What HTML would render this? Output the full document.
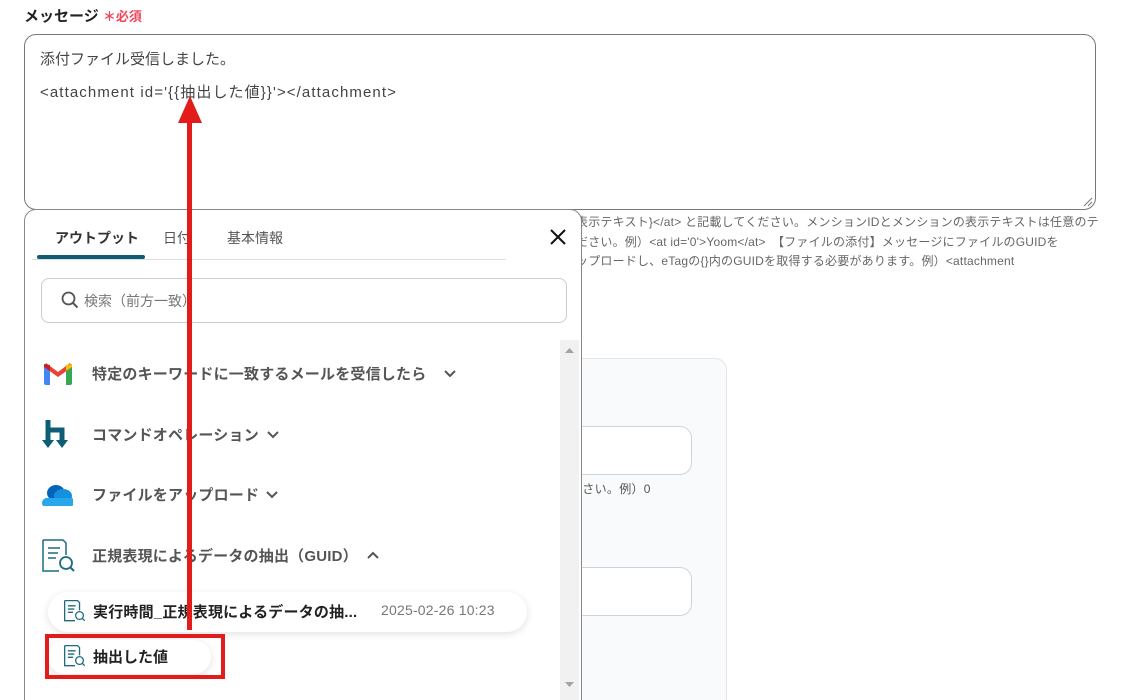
<!DOCTYPE html>
<html><head><meta charset="utf-8"><style>
*{box-sizing:border-box;margin:0;padding:0}
html,body{width:1136px;height:700px;overflow:hidden}
body{background:#fff;font-family:"Liberation Sans","Noto Sans CJK JP",sans-serif;position:relative;color:#333}
.a{position:absolute;white-space:nowrap}
</style></head><body>
<div class="a" style="left:24px;top:5px;font-size:15px;font-weight:bold;color:#222">メッセージ <span style="color:#f0455a;font-size:13px">＊必須</span></div>
<div class="a" style="left:24px;top:34px;width:1072px;height:176px;border:1px solid #777;border-radius:12px"></div>
<div class="a" style="left:40px;top:48px;font-size:15px;color:#444">添付ファイル受信しました。</div>
<div class="a" style="left:40px;top:81px;font-size:15px;color:#444;letter-spacing:1.1px">&lt;attachment id='{{抽出した値}}'&gt;&lt;/attachment&gt;</div>
<svg class="a" style="left:1082px;top:196px" width="12" height="12"><path d="M2 10L10 2M6 10L10 6" stroke="#777" stroke-width="1"/></svg>
<div class="a" style="left:576px;top:213px;font-size:12px;color:#666;line-height:19.5px;letter-spacing:0.2px">表示テキスト}&lt;/at&gt; と記載してください。メンションIDとメンションの表示テキストは任意のテ<br>ださい。例）&lt;at id='0'&gt;Yoom&lt;/at&gt;　【ファイルの添付】メッセージにファイルのGUIDを<br>ップロードし、eTagの{}内のGUIDを取得する必要があります。例）&lt;attachment</div>
<div class="a" style="left:560px;top:358px;width:167px;height:360px;background:#f9fafb;border:1px solid #e3e5e8;border-radius:12px"></div>
<div class="a" style="left:560px;top:426px;width:132px;height:49px;background:#fff;border:1px solid #cfd4dc;border-radius:12px"></div>
<div class="a" style="left:570px;top:480px;font-size:12px;color:#555;letter-spacing:0.3px">ださい。例）0</div>
<div class="a" style="left:560px;top:567px;width:132px;height:49px;background:#fff;border:1px solid #cfd4dc;border-radius:12px"></div>
<div class="a" style="left:24px;top:209px;width:558px;height:520px;background:#fff;border:1px solid #888;border-radius:12px 12px 0 0"></div>
<div class="a" style="left:55px;top:228px;font-size:14px;font-weight:bold;color:#333">アウトプット</div>
<div class="a" style="left:163px;top:228px;font-size:14px;color:#555">日付</div>
<div class="a" style="left:227px;top:228px;font-size:14px;color:#555">基本情報</div>
<div class="a" style="left:32px;top:259px;width:474px;height:1px;background:#ddd"></div>
<div class="a" style="left:37px;top:255px;width:108px;height:4px;background:#0f5d74;border-radius:2px"></div>
<svg class="a" style="left:549px;top:228px" width="18" height="18"><path d="M2 2L16 16M16 2L2 16" stroke="#111" stroke-width="2"/></svg>
<div class="a" style="left:41px;top:278px;width:526px;height:45px;border:1px solid #ccc;border-radius:8px"></div>
<svg class="a" style="left:61px;top:291px" width="18" height="18"><circle cx="7.5" cy="7.5" r="6" fill="none" stroke="#555" stroke-width="1.8"/><path d="M12 12L16.5 16.5" stroke="#555" stroke-width="2"/></svg>
<div class="a" style="left:84px;top:291px;font-size:14px;color:#777">検索（前方一致）</div>
<div class="a" style="left:560px;top:340px;width:19px;height:360px;background:#f1f1f1"></div>
<svg class="a" style="left:564px;top:346px" width="11" height="8"><path d="M1 7L5.5 2L10 7Z" fill="#a3a3a3"/></svg>
<svg class="a" style="left:564px;top:681px" width="11" height="8"><path d="M1 1L5.5 6L10 1Z" fill="#a3a3a3"/></svg>
<svg class="a" style="left:44px;top:362px" width="28" height="23" viewBox="0 0 28 23"><path d="M0 5v16a2 2 0 002 2h4V9z" fill="#4285f4"/><path d="M22 9v14h4a2 2 0 002-2V5z" fill="#34a853"/><path d="M0 5l14 10 14-10-2-4-12 9L2 1z" fill="#ea4335"/><path d="M22 3l6-1v3l-6 4z" fill="#fbbc04"/><path d="M0 2v3l6 4V3z" fill="#c5221f"/></svg>
<div class="a" style="left:92px;top:363px;font-size:15px;font-weight:bold;color:#555;letter-spacing:0.2px">特定のキーワードに一致するメールを受信したら</div>
<svg class="a" style="left:443px;top:369px" width="14" height="10"><path d="M2 2L7 7L12 2" fill="none" stroke="#555" stroke-width="2"/></svg>
<svg class="a" style="left:42px;top:420px" width="30" height="30" viewBox="0 0 30 30"><path d="M6 0v22M6 10h14v12" fill="none" stroke="#0f5d74" stroke-width="5"/><path d="M0 20h12L6 28zM14 20h12L20 28z" fill="#0f5d74"/></svg>
<div class="a" style="left:92px;top:424px;font-size:15px;font-weight:bold;color:#555;letter-spacing:0.2px">コマンドオペレーション</div>
<svg class="a" style="left:266px;top:430px" width="14" height="10"><path d="M2 2L7 7L12 2" fill="none" stroke="#555" stroke-width="2"/></svg>
<svg class="a" style="left:41px;top:482px" width="32" height="24" viewBox="0 0 32 24"><ellipse cx="15" cy="11" rx="9" ry="8" fill="#0364b8"/><ellipse cx="22" cy="14" rx="9" ry="7" fill="#1490df"/><path d="M2 24h28a4 4 0 000-8H6a5 5 0 00-4 8z" fill="#28a8ea"/></svg>
<div class="a" style="left:92px;top:484px;font-size:15px;font-weight:bold;color:#555;letter-spacing:0.2px">ファイルをアップロード</div>
<svg class="a" style="left:265px;top:490px" width="14" height="10"><path d="M2 2L7 7L12 2" fill="none" stroke="#555" stroke-width="2"/></svg>
<svg class="a" style="left:42px;top:539px" width="34" height="34" viewBox="0 0 34 34"><path d="M1 1h20l3 3v12M1 1v31h16" fill="none" stroke="#1d6b80" stroke-width="1.5"/><path d="M6 9h12M6 14h10M6 19h8" stroke="#1d6b80" stroke-width="1.5"/><circle cx="24" cy="24" r="6" fill="none" stroke="#1d6b80" stroke-width="1.8"/><path d="M28 28l4 4" stroke="#1d6b80" stroke-width="2"/></svg>
<div class="a" style="left:92px;top:545px;font-size:15px;font-weight:bold;color:#555;letter-spacing:0.2px">正規表現によるデータの抽出（GUID）</div>
<svg class="a" style="left:366px;top:550px" width="14" height="10"><path d="M2 8L7 3L12 8" fill="none" stroke="#555" stroke-width="2"/></svg>
<div class="a" style="left:48px;top:592px;width:479px;height:40px;background:#fff;border-radius:20px;box-shadow:0 2px 8px rgba(0,0,0,.12)"></div>
<svg class="a" style="left:64px;top:600px" width="22" height="22" viewBox="0 0 34 34"><path d="M1 1h20l3 3v12M1 1v31h16" fill="none" stroke="#1d6b80" stroke-width="2"/><path d="M6 9h12M6 14h10M6 19h8" stroke="#1d6b80" stroke-width="2"/><circle cx="24" cy="24" r="6" fill="none" stroke="#1d6b80" stroke-width="2"/><path d="M28 28l4 4" stroke="#1d6b80" stroke-width="2"/></svg>
<div class="a" style="left:93px;top:601px;font-size:15px;font-weight:bold;color:#222;letter-spacing:0.2px">実行時間_正規表現によるデータの抽...</div>
<div class="a" style="left:381px;top:602px;font-size:14px;color:#777;letter-spacing:0.2px">2025-02-26 10:23</div>
<div class="a" style="left:48px;top:640px;width:163px;height:34px;background:#fff;border-radius:17px;box-shadow:0 2px 8px rgba(0,0,0,.12)"></div>
<svg class="a" style="left:64px;top:645px" width="22" height="22" viewBox="0 0 34 34"><path d="M1 1h20l3 3v12M1 1v31h16" fill="none" stroke="#1d6b80" stroke-width="2"/><path d="M6 9h12M6 14h10M6 19h8" stroke="#1d6b80" stroke-width="2"/><circle cx="24" cy="24" r="6" fill="none" stroke="#1d6b80" stroke-width="2"/><path d="M28 28l4 4" stroke="#1d6b80" stroke-width="2"/></svg>
<div class="a" style="left:93px;top:646px;font-size:15px;font-weight:bold;color:#222">抽出した値</div>
<div class="a" style="left:45px;top:634px;width:180px;height:45px;border:4px solid #e21b1b"></div>
<div class="a" style="left:187px;top:118px;width:5px;height:512px;background:#e21b1b"></div>
<svg class="a" style="left:178px;top:96px" width="24" height="28"><path d="M12 0L24 27H0Z" fill="#e21b1b"/></svg>
</body></html>
